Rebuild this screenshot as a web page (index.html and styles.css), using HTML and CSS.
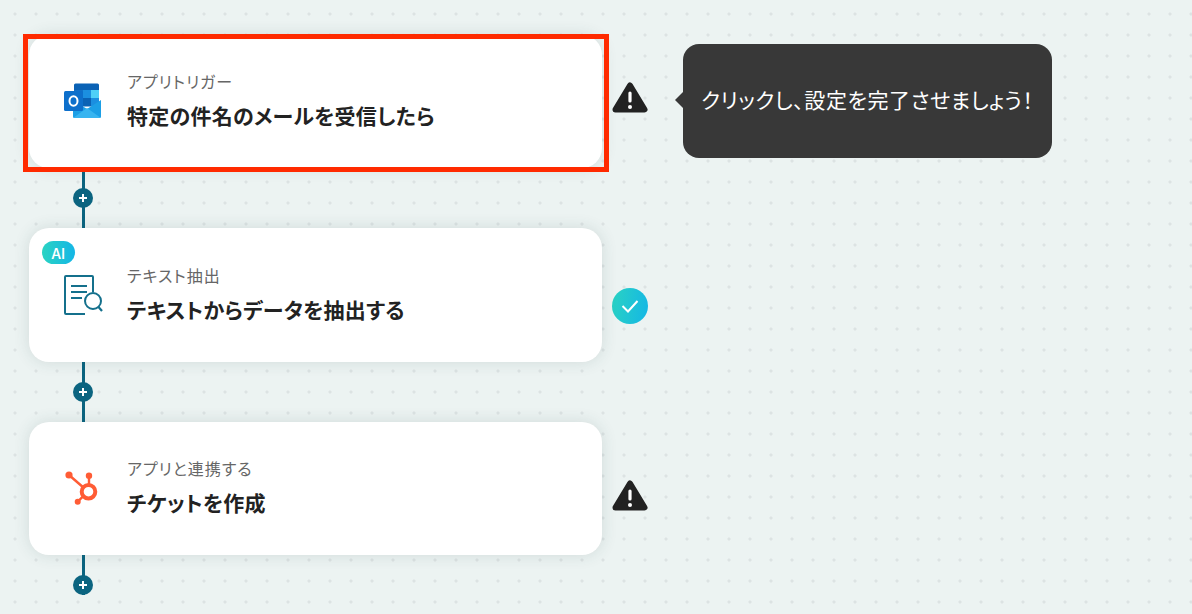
FILE: index.html
```html
<!DOCTYPE html>
<html lang="ja">
<head>
    <meta charset="UTF-8">
    <meta name="viewport" content="width=device-width, initial-scale=1.0">
    <title>フロー設定</title>
    <link rel="stylesheet" href="styles.css">
</head>
<body>

    <main class="flow">

        <!-- Step 1 -->
        <div class="step">
            <div class="card">
                <div class="selected"></div>
                <svg class="app-icon" viewBox="0 0 40 40">
                    <rect x="11" y="2.5" width="25" height="23" rx="1.5" fill="#0a62b5"/>
                    <rect x="19.5" y="9" width="8.5" height="8" fill="#1b8fe0"/>
                    <rect x="28" y="9" width="8" height="8" fill="#4fd0f7"/>
                    <rect x="11" y="9" width="8.5" height="8" fill="#1270c8"/>
                    <rect x="19.5" y="17" width="8.5" height="8" fill="#0a62b5"/>
                    <rect x="28" y="17" width="8" height="8" fill="#1b8fe0"/>
                    <path d="M10 19 L24 28 L38 19 V35.5 Q38 37 36.5 37 H11.5 Q10 37 10 35.5 Z" fill="#1c9fe6"/>
                    <path d="M10 37 L24 27 L38 37 Z" fill="#38b4f0"/>
                    <rect x="1" y="10" width="19" height="20" rx="1.5" fill="#0d6fcb"/>
                    <ellipse cx="10.5" cy="20" rx="4" ry="4.8" fill="none" stroke="#fff" stroke-width="2"/>
                </svg>
                <div class="card-text">
                    <p class="card-label">アプリトリガー</p>
                    <p class="card-title">特定の件名のメールを受信したら</p>
                </div>
            </div>
            <svg class="status status-warn-1" viewBox="0 0 36 32">
                <path d="M18 3.5 L32.5 27.5 H3.5 Z" fill="#222" stroke="#222" stroke-width="6" stroke-linejoin="round"/>
                <rect x="16.4" y="9.5" width="3.2" height="11" rx="1.6" fill="#fff"/>
                <circle cx="18" cy="25" r="2" fill="#fff"/>
            </svg>
            <div class="tooltip">クリックし、設定を完了させましょう！</div>
        </div>

        <div class="connector">
            <svg class="plus" viewBox="0 0 20 20"><circle cx="10" cy="10" r="10" fill="#0b6480"/><path d="M10 6 V14 M6 10 H14" stroke="#fff" stroke-width="2"/></svg>
        </div>

        <!-- Step 2 -->
        <div class="step">
            <div class="card">
                <span class="ai-badge">AI</span>
                <svg class="app-icon" viewBox="0 0 40 40" fill="none" stroke="#14708c" stroke-width="2">
                    <path d="M22 39 H3 Q2 39 2 38 V2 Q2 1 3 1 H29 Q30 1 30 2 V17"/>
                    <path d="M8 11 H24 M8 17 H24 M8 23 H19"/>
                    <circle cx="30" cy="26" r="8" fill="#fff"/>
                    <path d="M35.5 32 L39 36" stroke-width="2.2"/>
                </svg>
                <div class="card-text">
                    <p class="card-label">テキスト抽出</p>
                    <p class="card-title">テキストからデータを抽出する</p>
                </div>
            </div>
            <div class="status status-ok">
                <svg viewBox="0 0 20 20" fill="none" stroke="#fff" stroke-width="2"><path d="M2.5 10 L8 15.5 L17.5 5"/></svg>
            </div>
        </div>

        <div class="connector">
            <svg class="plus" viewBox="0 0 20 20"><circle cx="10" cy="10" r="10" fill="#0b6480"/><path d="M10 6 V14 M6 10 H14" stroke="#fff" stroke-width="2"/></svg>
        </div>

        <!-- Step 3 -->
        <div class="step">
            <div class="card">
                <svg class="app-icon" viewBox="0 0 40 40" fill="#ff5c35">
                    <path d="M6 7 L25 23.5 M26 8 V20 M14.7 33.7 L25 23.5" stroke="#ff5c35" stroke-width="2.4" fill="none"/>
                    <circle cx="6" cy="7" r="3.6"/>
                    <circle cx="26" cy="7.7" r="3.2"/>
                    <circle cx="14.7" cy="33.7" r="3"/>
                    <circle cx="25.5" cy="23.7" r="6.8" fill="#fff" stroke="#ff5c35" stroke-width="4"/>
                </svg>
                <div class="card-text">
                    <p class="card-label">アプリと連携する</p>
                    <p class="card-title">チケットを作成</p>
                </div>
            </div>
            <svg class="status status-warn-3" viewBox="0 0 36 32">
                <path d="M18 3.5 L32.5 27.5 H3.5 Z" fill="#222" stroke="#222" stroke-width="6" stroke-linejoin="round"/>
                <rect x="16.4" y="9.5" width="3.2" height="11" rx="1.6" fill="#fff"/>
                <circle cx="18" cy="25" r="2" fill="#fff"/>
            </svg>
        </div>

        <div class="connector connector-last">
            <svg class="plus" viewBox="0 0 20 20"><circle cx="10" cy="10" r="10" fill="#0b6480"/><path d="M10 6 V14 M6 10 H14" stroke="#fff" stroke-width="2"/></svg>
        </div>

    </main>

</body>
</html>
```

FILE: styles.css
```css
html, body { margin: 0; height: 100%; overflow: hidden; }
body {
    font-family: "Noto Sans CJK JP", "Noto Sans", sans-serif;
    background-color: #ecf3f2;
    background-image: radial-gradient(circle at 15px 14px, #dce3e3 1.2px, transparent 1.9px);
    background-size: 21px 21px;
    color: #222;
}

.flow { display: flex; flex-direction: column; align-items: flex-start; padding: 34.5px 0 0 29px; }
.step { display: flex; align-items: flex-start; }

.card {
    position: relative;
    box-sizing: border-box;
    display: flex;
    align-items: center;
    gap: 24px;
    width: 573px;
    height: 133.5px;
    padding-left: 34px;
    background: #fff;
    border-radius: 20px;
    box-shadow: 0 0 16px rgba(40, 80, 80, 0.14);
}
.card p { margin: 0; }
.app-icon { width: 40px; height: 40px; flex: none; }
.card-text { display: flex; flex-direction: column; gap: 8px; padding-bottom: 2px; }
.card-label { font-size: 16px; line-height: 22px; color: #666; font-feature-settings: "palt"; letter-spacing: 1px; }
.card-title { font-size: 21px; line-height: 30px; font-weight: 700; font-feature-settings: "palt"; letter-spacing: 0.25px; }

.selected {
    position: absolute;
    top: -0.5px; left: -6px; right: -7px; bottom: -3.5px;
    border: 5px solid #ff2a00;
}

.ai-badge {
    position: absolute;
    top: 13px; left: 13px;
    width: 33px; height: 23px;
    border-radius: 12px;
    background: linear-gradient(90deg, #2ad3c2, #14b6e6);
    color: #fff;
    font-size: 15px;
    font-weight: 500;
    line-height: 23px;
    text-align: center;
}

.status { flex: none; width: 36px; margin-left: 10px; }
.status-warn-1 { height: 32px; margin-top: 47px; }
.status-warn-3 { height: 32px; margin-top: 58px; }
.status-ok {
    height: 36px;
    margin-top: 60px;
    border-radius: 50%;
    background: linear-gradient(100deg, #2ad3c2, #14b6e6);
    display: flex;
    align-items: center;
    justify-content: center;
}
.status-ok svg { width: 20px; height: 20px; }

.tooltip {
    position: relative;
    box-sizing: border-box;
    width: 369px;
    height: 114px;
    margin: 9.5px 0 0 35px;
    padding-left: 18px;
    background: #383838;
    border-radius: 16px;
    color: #fff;
    font-size: 21px;
    line-height: 110px;
    font-feature-settings: "palt";
    letter-spacing: 0.6px;
}
.tooltip::before {
    content: "";
    position: absolute;
    left: -8px; top: 48px;
    border: 8px solid transparent;
    border-left: 0;
    border-right-color: #383838;
}

.connector {
    display: flex;
    align-items: center;
    width: 20px;
    height: 60px;
    margin-left: 44px;
    background: linear-gradient(#0b6480, #0b6480) center / 3px 100% no-repeat;
}
.connector-last { height: 40px; align-items: flex-end; }
.plus { width: 20px; height: 20px; }
```
